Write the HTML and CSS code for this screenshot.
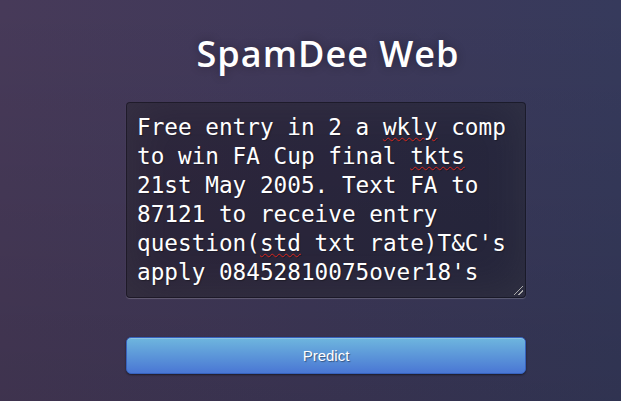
FILE: index.html
```html
<!DOCTYPE html>
<html lang="en">
<head>
<meta charset="utf-8">
<title>SpamDee Web</title>
<link rel="stylesheet" href="styles.css">
</head>
<body>
<main class="login">
  <h1 class="title">SpamDee Web</h1>
  <form class="form">
    <div class="message" role="textbox" aria-multiline="true">Free entry in 2 a <span class="typo">wkly</span> comp to win FA Cup final <span class="typo">tkts</span> 21st May 2005. Text FA to 87121 to receive entry question(<span class="typo">std</span> txt rate)T&amp;C's apply 08452810075over18's<span class="grip"></span></div>
    <button type="button" class="btn">Predict</button>
  </form>
</main>
</body>
</html>
```

FILE: styles.css
```css
html, body {
  height: 100%;
}

body {
  margin: 0;
  background:
    linear-gradient(to bottom, rgba(0, 0, 0, 0) 0%, rgba(0, 0, 0, 0.12) 100%),
    linear-gradient(to right, #473a59 0%, #3f395a 50%, #363a5c 100%);
  font-family: "Open Sans", "Noto Sans", sans-serif;
  overflow: hidden;
}

.login {
  width: 400px;
  margin-left: 126px;
  padding-top: 29px;
}

.title {
  margin: 0 0 23px;
  padding-left: 4px;
  text-align: center;
  color: #fff;
  font-size: 36px;
  font-weight: 600;
  line-height: 50px;
  letter-spacing: 1px;
  text-shadow: 0 0 10px rgba(0, 0, 0, 0.3);
}

.form {
  display: flex;
  flex-direction: column;
  gap: 39px;
}

.message {
  position: relative;
  box-sizing: border-box;
  width: 400px;
  height: 196px;
  padding: 10px;
  background: rgba(0, 0, 0, 0.3);
  border: 1px solid rgba(0, 0, 0, 0.3);
  border-radius: 4px;
  box-shadow: inset 0 -5px 45px rgba(100, 100, 100, 0.2), 0 1px 1px rgba(255, 255, 255, 0.2);
  color: #fff;
  font-family: "DejaVu Sans Mono", monospace;
  font-size: 22.7px;
  line-height: 29px;
  text-shadow: 1px 1px 1px rgba(0, 0, 0, 0.3);
  white-space: pre-wrap;
  overflow-wrap: break-word;
}

.typo {
  text-decoration: underline wavy #d9251d;
  text-decoration-thickness: 1px;
  text-underline-offset: 2px;
}

.grip {
  position: absolute;
  right: 2px;
  bottom: 2px;
  width: 9px;
  height: 9px;
  background:
    linear-gradient(135deg, transparent 45%, #aaa 45%, #aaa 53%, transparent 53%, transparent 72%, #aaa 72%, #aaa 80%, transparent 80%);
}

.btn {
  box-sizing: border-box;
  width: 400px;
  height: 37px;
  padding: 9px 14px;
  border: 1px solid #3762bc;
  border-radius: 5px;
  background-color: #4a77d4;
  background-image: linear-gradient(to bottom, #6eb6de, #4a77d4);
  box-shadow: inset 0 1px 0 rgba(255, 255, 255, 0.2), 0 1px 2px rgba(0, 0, 0, 0.5);
  color: #fff;
  font-family: "Liberation Sans", Arial, sans-serif;
  font-size: 15px;
  line-height: normal;
  text-shadow: 1px 1px 1px rgba(0, 0, 0, 0.4);
  cursor: pointer;
}
```
